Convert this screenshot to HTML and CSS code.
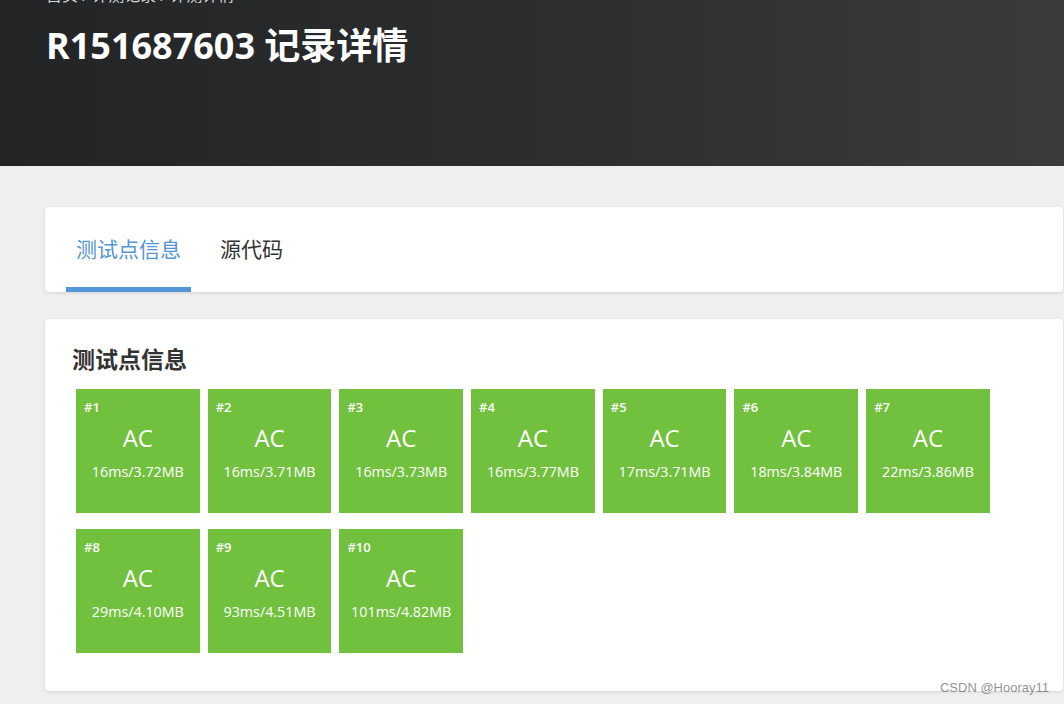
FILE: index.html
```html
<!DOCTYPE html>
<html lang="zh">
<head>
<meta charset="utf-8">
<link rel="stylesheet" href="styles.css">
</head>
<body>
<header class="header">
  <div class="header-inner">
    <div class="breadcrumb">首页 / 评测记录 / 评测详情</div>
    <h1 class="title">R151687603 记录详情</h1>
  </div>
</header>
<main class="main">
  <section class="card tabs-card">
    <div class="tab active">测试点信息</div>
    <div class="tab">源代码</div>
  </section>
  <section class="card cases-card">
    <h3 class="section-title">测试点信息</h3>
    <div class="cases">
      <div class="case"><span class="case-id">#1</span><span class="case-status">AC</span><span class="case-info">16ms/3.72MB</span></div>
      <div class="case"><span class="case-id">#2</span><span class="case-status">AC</span><span class="case-info">16ms/3.71MB</span></div>
      <div class="case"><span class="case-id">#3</span><span class="case-status">AC</span><span class="case-info">16ms/3.73MB</span></div>
      <div class="case"><span class="case-id">#4</span><span class="case-status">AC</span><span class="case-info">16ms/3.77MB</span></div>
      <div class="case"><span class="case-id">#5</span><span class="case-status">AC</span><span class="case-info">17ms/3.71MB</span></div>
      <div class="case"><span class="case-id">#6</span><span class="case-status">AC</span><span class="case-info">18ms/3.84MB</span></div>
      <div class="case"><span class="case-id">#7</span><span class="case-status">AC</span><span class="case-info">22ms/3.86MB</span></div>
      <div class="case"><span class="case-id">#8</span><span class="case-status">AC</span><span class="case-info">29ms/4.10MB</span></div>
      <div class="case"><span class="case-id">#9</span><span class="case-status">AC</span><span class="case-info">93ms/4.51MB</span></div>
      <div class="case"><span class="case-id">#10</span><span class="case-status">AC</span><span class="case-info">101ms/4.82MB</span></div>
    </div>
  </section>
</main>
<div class="watermark">CSDN @Hooray11</div>
</body>
</html>
```
FILE: styles.css
```css
html, body {
  margin: 0;
  padding: 0;
}
body {
  background: #efefef;
  font-family: "Open Sans", "Noto Sans CJK SC", sans-serif;
  color: #333;
  height: 704px;
  overflow: hidden;
  position: relative;
}
.header {
  height: 166px;
  background: linear-gradient(90deg, #232425 0%, #2c2d2f 50%, #3a3b3d 100%);
  overflow: hidden;
}
.header-inner {
  padding-left: 46px;
}
.breadcrumb {
  margin-top: -16px;
  font-size: 16px;
  line-height: 22px;
  color: #d8d8d8;
}
.title {
  margin: 15px 0 0;
  font-size: 36px;
  line-height: 50px;
  font-weight: 700;
  color: #fff;
}
.main {
  padding: 41px 1px 0 45px;
  display: flex;
  flex-direction: column;
  gap: 27px;
}
.card {
  background: #fff;
  border-radius: 4px;
  box-shadow: 0 1px 3px rgba(0, 0, 0, 0.12);
}
.tabs-card {
  height: 85px;
  display: flex;
  align-items: stretch;
  padding-left: 21px;
  box-sizing: border-box;
}
.tab {
  display: flex;
  align-items: center;
  padding: 1px 10px 0;
  font-size: 21px;
  color: #333;
  border-bottom: 5px solid transparent;
  margin-right: 19px;
}
.tab.active {
  color: #5596d6;
  border-bottom-color: #5596d6;
}
.cases-card {
  height: 372px;
  box-sizing: border-box;
  padding: 25px 27px 0 27px;
}
.section-title {
  margin: 0;
  font-size: 23px;
  line-height: 30px;
  font-weight: 700;
  color: #333;
}
.cases {
  display: flex;
  flex-wrap: wrap;
  column-gap: 8px;
  row-gap: 16px;
  padding: 15px 0 0 4px;
}
.case {
  width: 123.7px;
  height: 124px;
  background: #72c13e;
  color: #fff;
  display: flex;
  flex-direction: column;
  align-items: center;
  box-sizing: border-box;
}
.case-id {
  align-self: flex-start;
  margin: 10px 0 0 8px;
  font-size: 13px;
  line-height: 16px;
  font-weight: 600;
}
.case-status {
  margin-top: 7px;
  font-size: 24px;
  line-height: 32px;
}
.case-info {
  margin-top: 8px;
  font-size: 14.3px;
  line-height: 20px;
}
.watermark {
  position: absolute;
  right: 15px;
  bottom: 9px;
  font-family: "Liberation Sans", Arial, sans-serif;
  font-size: 13px;
  color: rgba(110, 110, 110, 0.75);
}
```
